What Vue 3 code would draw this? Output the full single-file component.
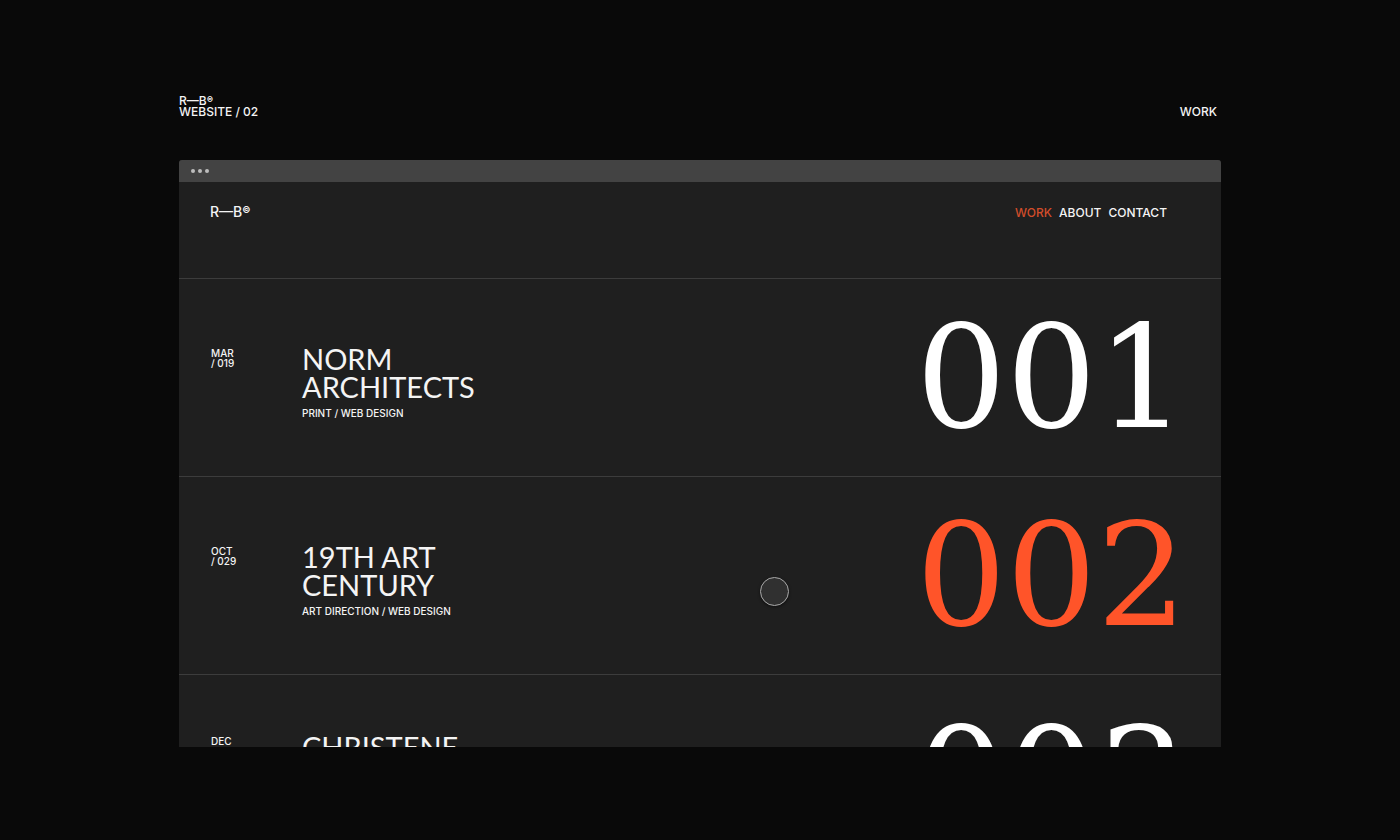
<script setup>
const links = [
  { label: 'Work', active: true },
  { label: 'About', active: false },
  { label: 'Contact', active: false },
]

const projects = [
  { id: '001', date: ['MAR', '/ 019'], title: ['NORM', 'ARCHITECTS'], tags: 'PRINT / WEB DESIGN' },
  { id: '002', date: ['OCT', '/ 029'], title: ['19TH ART', 'CENTURY'], tags: 'ART DIRECTION / WEB DESIGN', active: true },
  { id: '003', date: ['DEC'], title: ['CHRISTENE'], entering: true },
]
</script>

<template>
  <div class="page">
    <header class="caption">
      <p>R—B<span class="mark">©</span><br />WEBSITE / 02</p>
      <p class="section">WORK</p>
    </header>

    <main class="window">
      <div class="bar"><i></i><i></i><i></i></div>
      <div class="site">
        <header class="top">
          <a href="#" class="logo">R—B<span class="mark">©</span></a>
          <nav>
            <a v-for="l in links" :key="l.label" href="#" :class="{ active: l.active }">{{ l.label }}</a>
          </nav>
        </header>

        <article
          v-for="p in projects"
          :key="p.id"
          class="project"
          :class="{ active: p.active, entering: p.entering }"
        >
          <p class="date"><span v-for="d in p.date" :key="d">{{ d }}</span></p>
          <div class="info">
            <h2><span v-for="t in p.title" :key="t">{{ t }}</span></h2>
            <p v-if="p.tags" class="tags">{{ p.tags }}</p>
          </div>
          <span class="number">{{ p.id }}</span>
        </article>
        <span class="cursor"></span>
      </div>
    </main>
  </div>
</template>

<style>
body {
  background: #090909;
}
</style>

<style scoped>
.page {
  box-sizing: border-box;
  height: 100vh;
  padding: 95px 179px 93px;
  display: flex;
  flex-direction: column;
  background: #090909;
  color: #f4f4f4;
  font: 500 12px/11px Inter, "Liberation Sans", sans-serif;
}
p,
h2 {
  margin: 0;
}
a {
  color: inherit;
  text-decoration: none;
}
.caption {
  display: flex;
  justify-content: space-between;
  align-items: flex-end;
  height: 22px;
  margin-bottom: 43px;
  padding-right: 4px;
}
.mark {
  font-size: 7px;
  line-height: 1px;
  vertical-align: 3px;
  font-weight: 700;
}
.window {
  flex: 1;
  min-height: 0;
  display: flex;
  flex-direction: column;
  overflow: hidden;
  border-radius: 3px 3px 0 0;
  background: #1f1f1f;
}
.bar {
  flex: none;
  display: flex;
  align-items: center;
  gap: 3px;
  height: 22px;
  padding-left: 12px;
  background: #434343;
}
.bar i {
  width: 4px;
  height: 4px;
  border-radius: 50%;
  background: #bdbdbd;
}
.site {
  position: relative;
  flex: 1;
  min-height: 0;
  overflow: hidden;
}
.top {
  box-sizing: border-box;
  height: 96px;
  padding: 22px 54px 0 31px;
  display: flex;
  justify-content: space-between;
  align-items: flex-start;
}
.logo {
  font-size: 14px;
  line-height: 16px;
}
.logo .mark {
  font-size: 9px;
  vertical-align: 4px;
}
nav {
  display: flex;
  gap: 7px;
  padding-top: 3px;
  text-transform: uppercase;
}
nav .active {
  color: #d14d2a;
}
.project {
  box-sizing: border-box;
  display: grid;
  grid-template-columns: 91px 1fr auto;
  height: 198px;
  padding: 66px 34px 0 32px;
  border-top: 1px solid #3c3c3c;
}
.project.entering {
  padding-top: 58px;
}
.date {
  padding-top: 3px;
  font-size: 10px;
  line-height: 10px;
}
.date span,
h2 span {
  display: block;
}
h2 {
  font: 400 29px/28px Lato, "Liberation Sans", sans-serif;
}
.tags {
  margin-top: 6px;
  font-size: 10px;
  line-height: 12px;
}
.number {
  height: 0;
  display: flex;
  align-items: center;
  margin-top: 33px;
  color: #fff;
  font: 400 142px/142px "DejaVu Serif", serif;
}
.active .number {
  color: #ff5429;
}
.entering .number {
  margin-top: 47px;
}
.cursor {
  position: absolute;
  top: 395px;
  left: 57%;
  width: 27px;
  height: 27px;
  margin-left: -13px;
  border: 1px solid #aaa;
  border-radius: 50%;
  background: #303030;
  box-shadow: 0 1px 3px #0008;
}
</style>
